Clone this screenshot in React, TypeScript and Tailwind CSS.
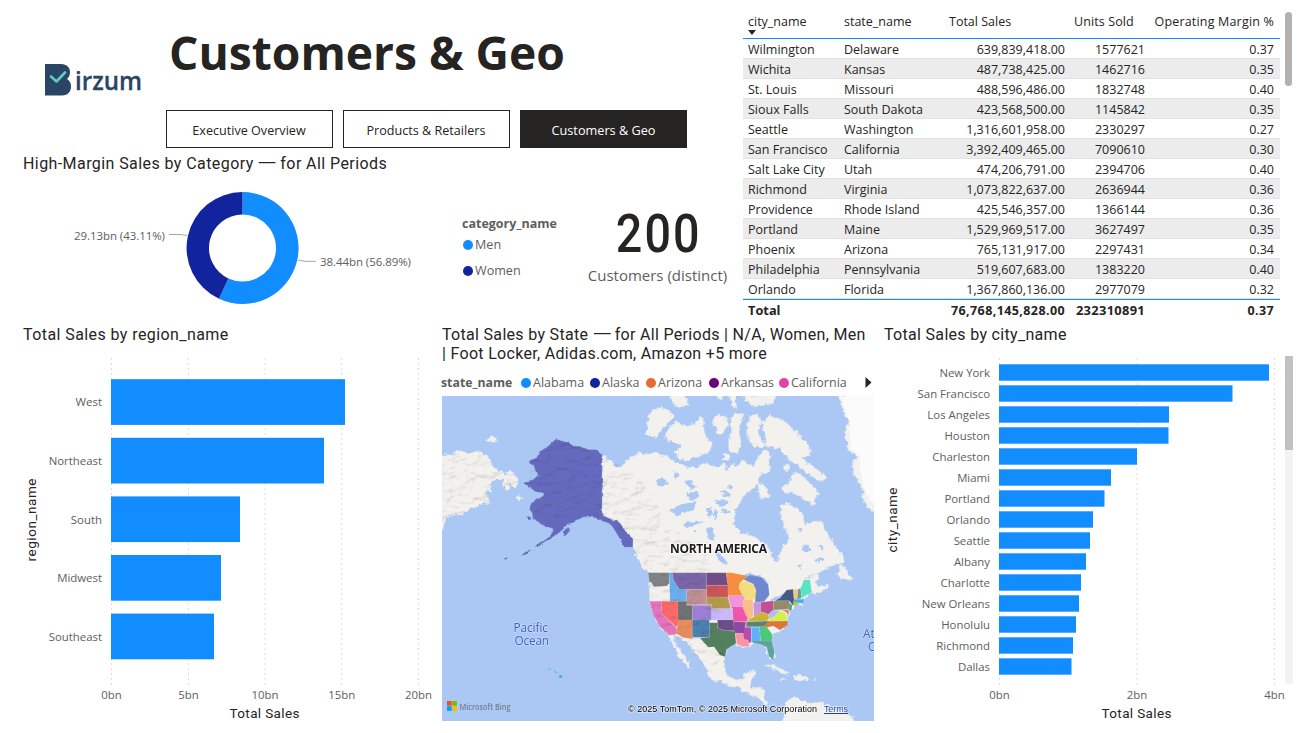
import React from "react";

const cities: [string, string, string, string, string][] = [
  ["Wilmington", "Delaware", "639,839,418.00", "1577621", "0.37"],
  ["Wichita", "Kansas", "487,738,425.00", "1462716", "0.35"],
  ["St. Louis", "Missouri", "488,596,486.00", "1832748", "0.40"],
  ["Sioux Falls", "South Dakota", "423,568,500.00", "1145842", "0.35"],
  ["Seattle", "Washington", "1,316,601,958.00", "2330297", "0.27"],
  ["San Francisco", "California", "3,392,409,465.00", "7090610", "0.30"],
  ["Salt Lake City", "Utah", "474,206,791.00", "2394706", "0.40"],
  ["Richmond", "Virginia", "1,073,822,637.00", "2636944", "0.36"],
  ["Providence", "Rhode Island", "425,546,357.00", "1366144", "0.36"],
  ["Portland", "Maine", "1,529,969,517.00", "3627497", "0.35"],
  ["Phoenix", "Arizona", "765,131,917.00", "2297431", "0.34"],
  ["Philadelphia", "Pennsylvania", "519,607,683.00", "1383220", "0.40"],
  ["Orlando", "Florida", "1,367,860,136.00", "2977079", "0.32"],
];

const tableCols = "grid grid-cols-[97px_96px_129px_80px_135px]";

function Logo() {
  return (
    <svg className="overflow-visible" width="98" height="34" viewBox="0 0 98 34">
      <path
        d="M0 1H16C22 1 25 5 25 9C25 12 24 14 22 16C25 18 26 20 26 24C26 29 22 32.500 17 32.500H0Z"
        fill="#2a4565"
      />
      <path d="M6 13.500L11.500 18.500L20 9.500" fill="none" stroke="#62cbbf" strokeWidth="2.600" strokeLinecap="round" strokeLinejoin="round" />
      <text x="30" y="26.500" fontFamily="Open Sans, sans-serif" fontWeight="600" fontSize="26" fill="#2a4565" stroke="#2a4565" strokeWidth=".3" textLength="67" lengthAdjust="spacingAndGlyphs">
        irzum
      </text>
    </svg>
  );
}

function NavButton({ label, active }: { label: string; active?: boolean }) {
  return (
    <button
      className={
        active
          ? "flex h-[38px] w-[167px] items-center justify-center border border-[#252423] bg-[#252423] pt-1 text-[12.7px] text-white"
          : "flex h-[38px] w-[167px] items-center justify-center border border-[#252423] bg-white pt-1 pr-px text-[12.6px] text-[#252423]"
      }
    >
      {label}
    </button>
  );
}

function PanelTitle({ children, wide }: { children: React.ReactNode; wide?: boolean }) {
  return (
    <h2
      className={
        wide
          ? "font-['Roboto',sans-serif] text-[16px] leading-[19px] font-normal tracking-[0.42px] whitespace-nowrap text-[#252423]"
          : "font-['Roboto',sans-serif] text-[16px] leading-[19px] font-normal tracking-[0.31px] whitespace-nowrap text-[#252423]"
      }
    >
      {children}
    </h2>
  );
}

function Dash() {
  return <span className="mr-[2px] ml-[3px] inline-block scale-x-[1.6]">—</span>;
}

function Donut() {
  return (
    <svg width="420" height="130" viewBox="20 180 420 130" fontFamily="Open Sans, sans-serif" fontSize="11.500" fill="#605e5c">
      <path d="M242.500 192A56 56 0 1 1 219 298.800L228.400 278.400A33.500 33.500 0 1 0 242.500 214.500Z" fill="#118dff" />
      <path d="M219 298.800A56 56 0 0 1 242.500 192V214.500A33.500 33.500 0 0 0 228.400 278.400Z" fill="#12239e" />
      <path d="M169 234.500H180L187 235.500M298 260L304 261.300H316" fill="none" stroke="#a6a6a6" />
      <text x="74" y="240" textLength="91">29.13bn (43.11%)</text>
      <text x="320" y="266" textLength="91">38.44bn (56.89%)</text>
    </svg>
  );
}

function SalesTable() {
  return (
    <section className="flex gap-[5px] pt-[11px] pl-[2px] text-[12.5px] text-[#252423]">
      <div className="w-[537px]">
        <div className={`${tableCols} h-7 border-b border-[#118dff] pt-px text-[12.5px] leading-5`}>
          <div className="relative pl-[5px]">
            city_name
            <svg className="absolute top-[18px] left-[5px]" width="8" height="5" viewBox="0 0 8 5">
              <path d="M0 0H8L4 5Z" fill="#252423" />
            </svg>
          </div>
          <div className="pl-1">state_name</div>
          <div className="pl-[13px]">Total Sales</div>
          <div className="pl-[9px] tracking-[0.1px]">Units Sold</div>
          <div className="pr-[6px] text-right tracking-[0.18px] whitespace-nowrap">Operating Margin %</div>
        </div>
        {cities.map((r, i) => (
          <div
            key={r[0]}
            className={
              i % 2
                ? `${tableCols} h-5 border-b border-[#e2e2e2] bg-[#ececec] leading-[21px]`
                : `${tableCols} h-5 border-b border-[#e2e2e2] leading-[21px]`
            }
          >
            <div className="pl-[5px]">{r[0]}</div>
            <div className="pl-1">{r[1]}</div>
            <div className="text-right">{r[2]}</div>
            <div className="text-right">{r[3]}</div>
            <div className="pr-[6px] text-right">{r[4]}</div>
          </div>
        ))}
        <div className={`${tableCols} h-5 border-t border-[#118dff] text-[12.5px] leading-[21px] font-bold`}>
          <div className="pl-[5px] text-[12.8px]">Total</div>
          <div />
          <div className="text-right tracking-[0.4px]">76,768,145,828.00</div>
          <div className="pl-2 text-right text-[12.9px] tracking-[0.3px]">232310891</div>
          <div className="pr-[6px] text-right tracking-[0.4px]">0.37</div>
        </div>
      </div>
      <div className="mt-[1px] h-[74px] w-[7px] rounded-full bg-[#b3b0ad]" />
    </section>
  );
}

type Bar = { name: string; end: number };

function BarChart(p: {
  bars: Bar[];
  view: string;
  width: number;
  zero: number;
  ticks: [number, string][];
  top: number;
  pitch: number;
  bar: number;
  axis: string;
  axisX: number;
  axisLen: number;
  titleX: number;
}) {
  return (
    <svg width={p.width} height="375" viewBox={p.view} fontFamily="Open Sans, sans-serif" fontSize="11.400" fill="#605e5c">
      {p.ticks.map(([x, t]) => (
        <g key={t}>
          <line x1={x} x2={x} y1="358" y2="685" stroke="#dedede" strokeDasharray="2 3" />
          <text x={x} y="699" textAnchor="middle">{t}</text>
        </g>
      ))}
      {p.bars.map((b, i) => (
        <g key={b.name}>
          <rect x={p.zero} y={p.top + i * p.pitch} width={b.end - p.zero} height={p.bar} fill="#118dff" />
          <text x={p.zero - 9} y={Math.round(p.top + i * p.pitch + p.bar / 2 + 4.3)} textAnchor="end">{b.name}</text>
        </g>
      ))}
      <g fontFamily="Roboto, sans-serif" fontSize="13.500" fill="#252423">
        <text x={p.titleX} y="718" textAnchor="middle" textLength="70">Total Sales</text>
        <text transform={`translate(${p.axisX} 520) rotate(-90)`} textAnchor="middle" textLength={p.axisLen}>{p.axis}</text>
      </g>
    </svg>
  );
}

const regionBars: Bar[] = [
  { name: "West", end: 345 },
  { name: "Northeast", end: 324 },
  { name: "South", end: 240 },
  { name: "Midwest", end: 221 },
  { name: "Southeast", end: 214 },
];

const cityBars: Bar[] = [
  { name: "New York", end: 1269 },
  { name: "San Francisco", end: 1232.5 },
  { name: "Los Angeles", end: 1169 },
  { name: "Houston", end: 1168.5 },
  { name: "Charleston", end: 1137 },
  { name: "Miami", end: 1111 },
  { name: "Portland", end: 1104.5 },
  { name: "Orlando", end: 1093 },
  { name: "Seattle", end: 1090 },
  { name: "Albany", end: 1086 },
  { name: "Charlotte", end: 1081 },
  { name: "New Orleans", end: 1079 },
  { name: "Honolulu", end: 1076 },
  { name: "Richmond", end: 1073 },
  { name: "Dallas", end: 1071.5 },
];

const statesLegend: [string, string, string][] = [
  ["Alabama", "bg-[#118dff]", "w-[69px]"],
  ["Alaska", "bg-[#12239e]", "w-[56px]"],
  ["Arizona", "bg-[#e66c37]", "w-[63px]"],
  ["Arkansas", "bg-[#6b007b]", "w-[70px]"],
  ["California", "bg-[#e044a7]", "w-[80px]"],
];

const mainland =
  "M485 178L500 190 515 202 530 212 545 216 550 208 565 192 590 180 600 170 620 180 645 172 675 182 705 200 725 210 745 218 770 218 795 206 815 210 835 215 850 205 860 225 880 205 888 216 908 195 925 208 942 215 955 190 957 180 972 166 990 172 988 200 992 225 975 240 962 236 958 255 950 268 935 285 915 300 900 320 888 340 880 368 882 392 895 400 905 415 925 420 945 425 965 440 985 455 995 480 1002 497 1010 502 1017 480 1026 470 1027 455 1045 440 1050 430 1042 415 1035 400 1030 380 1020 360 1026 345 1022 330 1040 325 1055 330 1070 340 1085 350 1090 375 1100 390 1115 380 1130 378 1145 380 1155 400 1165 420 1175 440 1190 460 1205 478 1212 495 1205 505 1185 510 1160 518 1135 535 1105 545 1088 558 1110 548 1130 535 1140 545 1122 560 1135 575 1168 568 1155 585 1125 598 1112 592 1100 602 1085 615 1092 625 1070 629 1055 640 1052 650 1042 662 1043 685 1020 706 1000 720 990 738 1002 770 1003 790 998 796 985 780 978 758 965 745 945 745 930 747 928 756 905 752 880 748 865 764 857 778 850 800 853 825 865 847 890 855 910 850 917 833 943 827 945 840 935 855 930 877 945 880 970 883 977 890 973 915 980 930 1000 930 975 932 955 905 930 900 905 885 890 877 870 873 845 860 810 855 805 840 795 815 775 785 760 765 745 750 730 733 700 722 703 740 718 760 735 785 748 808 750 822 735 808 718 785 705 760 692 735 688 722 665 700 645 665 628 620 628 575 630 533 618 525 600 500 590 480 578 455 560 420 540 385 510 372 485 362Z";

const land = [
  "M0 178L35 180 45 172 75 170 80 178 100 168 125 172 145 185 155 200 160 215 185 232 200 235 210 225 222 240 238 255 228 265 225 278 210 270 200 285 188 272 190 255 170 250 155 258 150 275 155 290 130 288 138 300 147 325 120 328 100 335 85 345 70 358 45 358 30 365 20 360 15 380 5 410 0 420Z",
  "M138 138L150 124 172 128 170 138Z",
  "M222 305L235 303 247 308 240 314 228 311Z",
  "M625 75L635 45 660 38 690 48 700 68 675 95 650 122 635 130 620 110Z",
  "M675 115L705 80 720 85 740 95 765 85 780 60 793 75 790 100 800 130 815 150 805 175 775 180 740 198 720 190 705 170 725 150 680 135Z",
  "M870 70L890 55 913 60 895 100 903 140 895 175 873 175 865 150 875 110Z",
  "M817 75L835 60 860 65 863 95 845 120 830 110Z",
  "M920 100L930 65 955 60 963 80 953 110 970 140 980 155 945 155 930 140Z",
  "M965 80L990 62 1030 75 1045 90 1070 110 1105 150 1110 180 1085 190 1115 210 1145 235 1160 250 1140 260 1110 240 1075 215 1050 195 1030 175 1015 160 980 155 975 120Z",
  "M685 0H735L745 30 705 35Z",
  "M828 0H850L845 20Z",
  "M870 0H885L890 40 875 30Z",
  "M910 0H1005L1000 25 975 30 945 35 920 20Z",
  "M850 180L868 175 870 195 848 198Z",
  "M1045 265L1065 230 1085 240 1115 270 1135 295 1120 330 1085 310 1065 295 1030 290 1028 278Z",
  "M1030 210L1045 207 1047 225 1033 228Z",
  "M950 268L970 262 980 280 990 305 965 312Z",
  "M1193 0L1215 60 1225 80 1215 110 1225 170 1255 180 1235 210 1245 250 1270 280 1270 320 1295 350 1310 345V0Z",
  "M1190 540L1200 513 1215 512 1220 530 1240 550 1235 560 1215 550 1200 552Z",
  "M970 810L995 810 1025 822 1050 836 1030 837 1005 822Z",
  "M1060 840L1095 842 1103 852 1080 858 1060 852Z",
  "M1022 852L1036 854 1026 858Z",
  "M1115 852H1130L1124 857Z",
  "M1028 932L1045 915 1070 905 1085 920 1125 923 1155 925 1175 940 1215 950 1240 970 1250 985H1030L1035 955Z",
  "M600 505L618 508 635 525 630 534 612 522Z",
];

const lakes = [
  "M645 255L665 248 685 262 668 275 650 270Z",
  "M690 348L712 330 740 325 770 322 762 342 735 350 708 360Z",
  "M728 255L748 252 768 275 752 282Z",
  "M738 298L777 288 774 308 750 314Z",
  "M730 388L765 376 790 381 765 391 735 398Z",
  "M798 402L817 398 826 437 808 434Z",
  "M826 466L846 483 864 505 855 512 836 492Z",
  "M822 318L850 313 862 326 838 332Z",
  "M798 343L812 332 820 364 806 368Z",
  "M840 288L865 290 880 300 850 302Z",
  "M845 338L872 350 868 358 848 352Z",
  "M865 270L880 272 876 284 866 280Z",
  "M822 345L832 350 828 372 820 366Z",
  "M700 225L718 240 712 250 702 238Z",
  "M762 402L772 406 768 416 760 410Z",
  "M1088 453L1107 448 1110 467 1092 470Z",
  "M1138 448L1154 455 1145 470Z",
  "M1123 495L1150 488 1154 497 1130 503Z",
  "M1070 400L1085 402 1080 412Z",
  "M1075 510L1085 505 1083 525Z",
  "M905 540L930 535 965 545 985 565 975 570 945 560 915 558Z",
  "M990 615L1025 598 1035 605 1005 622Z",
];

const states: [string, string][] = [
  ["25,38 88,38 88,70 80,78 42,80 35,68 28,65", "#7f8388"],
  ["88,38 97,38 100,60 110,75 118,88 140,88 140,123 90,123", "#6aaef0"],
  ["97,38 200,38 200,88 140,88 118,88 110,75 100,60", "#7b66a8"],
  ["200,38 258,38 264,76 200,76", "#6f4d86"],
  ["200,76 264,76 264,112 200,112", "#cb5459"],
  ["258,38 275,38 323,48 300,68 297,85 310,107 264,107 264,76", "#f58d42"],
  ["300,68 320,62 345,78 348,118 312,118 297,85", "#f5dc7d"],
  ["310,58 330,45 365,52 385,75 388,105 372,125 345,127 348,90 340,72", "#6f87cf"],
  ["140,88 200,88 200,134 140,134", "#bf9096"],
  ["200,110 264,112 272,146 215,146 215,134 200,134", "#b39a4c"],
  ["264,107 310,107 317,125 308,140 272,140", "#f193dd"],
  ["28,124 65,124 65,160 110,205 110,222 88,226 60,200 40,165", "#e474bd"],
  ["65,124 114,124 114,195 108,200 65,160", "#fb6a6a"],
  ["114,124 140,124 140,136 157,136 157,180 114,180", "#707173"],
  ["157,136 215,136 215,180 157,180", "#9b80d4"],
  ["215,146 278,146 280,180 215,180", "#c9b9fb"],
  ["272,140 308,140 325,170 320,185 280,185 278,146", "#ee55ab"],
  ["308,120 338,118 340,165 328,180 317,165 308,140", "#fabd88"],
  ["340,127 363,127 363,160 342,172", "#c795dc"],
  ["363,127 400,122 400,150 385,163 363,155", "#c24f95"],
  ["320,184 328,178 345,168 363,156 385,163 388,175 380,183", "#cbb435"],
  ["320,185 388,183 375,200 318,200", "#5a8276"],
  ["385,163 400,150 422,152 400,172 390,178", "#b3bdf0"],
  ["380,183 400,172 420,152 438,160 442,183", "#d3f04a"],
  ["400,124 448,122 448,148 400,150", "#948b67"],
  ["405,122 420,115 440,90 460,88 462,118 460,138 448,122", "#465a86"],
  ["460,88 474,88 472,118 462,118", "#fac47c"],
  ["474,88 482,85 484,115 472,118", "#6a9aa0"],
  ["482,85 492,60 510,60 515,95 485,115", "#57e5c1"],
  ["462,118 492,118 490,130 462,128", "#47b1e8"],
  ["460,127 476,127 473,136 460,137", "#c8b94a"],
  ["448,128 456,135 455,150 447,152", "#4aa56c"],
  ["425,150 446,150 446,165 438,156", "#dd7383"],
  ["370,200 385,184 443,183 443,195 420,210 400,198 382,202", "#d9773f"],
  ["358,200 380,200 398,225 395,243 362,243", "#4bc878"],
  ["334,202 358,202 362,243 334,245", "#5fb0fb"],
  ["312,202 333,202 333,248 318,247 308,230", "#b64cae"],
  ["280,185 318,187 312,220 283,220", "#8a48a0"],
  ["287,220 310,220 312,238 325,240 328,258 310,260 290,252", "#fb94a2"],
  ["232,180 280,180 283,212 255,212 234,205", "#6b4f88"],
  ["208,188 233,188 233,205 255,212 285,214 288,250 260,268 255,290 240,285 222,260 205,262 180,234 208,232", "#55805f"],
  ["114,180 157,180 157,237 128,232 108,220 112,200", "#ea8b5e"],
  ["157,180 208,180 208,232 157,232", "#4c80b0"],
  ["335,243 395,243 403,275 400,300 388,290 380,262 360,252 340,250", "#5da49f"],
];

const alaska =
  "M350 132L362 138 388 145 400 155 420 155 445 165 470 165 485 178V362L510 372 520 380 530 375 545 395 560 415 578 432 577 455 553 455 540 430 525 405 515 390 495 378 470 368 440 362 430 365 410 375 400 382 385 385 375 395 360 410 345 420 330 432 315 440 300 450 285 458 290 450 310 440 330 425 340 410 340 400 315 392 300 385 295 375 280 370 278 355 270 340 275 325 290 312 300 308 312 303 312 293 295 290 280 285 265 272 252 265 265 258 280 255 295 240 290 225 280 210 268 205 270 197 290 190 300 170 320 158 335 145ZM370 410L385 398 388 408 375 422ZM247 480L262 467 270 465 258 477ZM260 368L268 365 273 371 266 374ZM192 492L202 488 198 493Z";

function NorthAmericaMap() {
  return (
    <svg width="432" height="325" viewBox="442 396 432 325" fontFamily="Open Sans, sans-serif">
      <defs>
        <filter id="coast" x="-5%" y="-5%" width="110%" height="110%">
          <feTurbulence type="fractalNoise" baseFrequency="0.22" numOctaves="3" seed="4" result="n" />
          <feDisplacementMap in="SourceGraphic" in2="n" scale="6" xChannelSelector="R" yChannelSelector="G" />
        </filter>
        <filter id="shore" x="-5%" y="-5%" width="110%" height="110%">
          <feTurbulence type="fractalNoise" baseFrequency="0.06" numOctaves="3" seed="4" result="n" />
          <feDisplacementMap in="SourceGraphic" in2="n" scale="9" xChannelSelector="R" yChannelSelector="G" />
        </filter>
        <filter id="relief" x="0" y="0" width="100%" height="100%" colorInterpolationFilters="sRGB">
          <feTurbulence type="fractalNoise" baseFrequency="0.025 0.045" numOctaves="4" seed="9" result="n" />
          <feDiffuseLighting in="n" surfaceScale="9" diffuseConstant="1.13" lightingColor="#ffffff" result="l">
            <feDistantLight azimuth="230" elevation="62" />
          </feDiffuseLighting>
          <feComposite in="l" in2="SourceGraphic" operator="in" />
        </filter>
      </defs>
      <rect x="442" y="396" width="432" height="325" fill="#abc7f3" />
      <g filter="url(#coast)">
        <g transform="translate(440 395) scale(.33333)" fill="#f2f1ed" stroke="#dfe6ee" strokeWidth="2">
          <path d={mainland} />
          {land.map((d) => (
            <path key={d} d={d} />
          ))}
          <path d="M1200 0L1228 80 1232 170 1262 190 1262 250 1280 300 1310 340V0Z" fill="#fbfbfb" stroke="none" />
          <g fill="#abc7f3" stroke="none">
            {lakes.map((d) => (
              <path key={d} d={d} />
            ))}
          </g>
        </g>
      </g>
      <g transform="translate(640 560) scale(.33333)" stroke="#ffffff" strokeOpacity=".15" strokeWidth="1.500">
        {states.map(([pts, fill]) => (
          <polygon key={pts} points={pts} fill={fill} />
        ))}
      </g>
      <path filter="url(#shore)" transform="translate(440 395) scale(.33333)" d={alaska} fill="#656bbe" stroke="#6268ba" strokeWidth="2" />
      <g transform="translate(440 395) scale(.33333)">
        <g className="opacity-20 mix-blend-multiply">
          <path
            filter="url(#relief)"
            d="M485 178L350 135 275 200 265 265 310 295 275 345 340 395 440 362 485 362 570 430 625 530 630 620 665 700 700 722 745 750 805 840 850 780 850 640 800 480 680 380 600 250Z"
          />
          <path filter="url(#relief)" d={land[0]} />
        </g>
      </g>
      <path d="M548 668.500L551 669.500M554 671L557 673" stroke="#52c5ee" strokeWidth="1.200" />
      <circle cx="560.500" cy="676.500" r="1.600" fill="#33b1e6" />
      <text x="670" y="553" fontSize="12" fontWeight="700" fill="#1b1b1b" stroke="#ffffff" strokeWidth="2" strokeOpacity=".6" paintOrder="stroke" textLength="97">NORTH AMERICA</text>
      <g fontSize="11.800" fill="#3f62c4" stroke="#c6d8f8" strokeWidth="1.500" paintOrder="stroke">
        <text x="513.500" y="632" textLength="34.500">Pacific</text>
        <text x="514.500" y="645" textLength="34.500">Ocean</text>
        <text x="863" y="638">Atlantic</text>
        <text x="868" y="651">Ocean</text>
      </g>
      <g>
        <rect x="447" y="701" width="4.700" height="4.700" fill="#f25022" />
        <rect x="452.200" y="701" width="4.700" height="4.700" fill="#7fba00" />
        <rect x="447" y="706.200" width="4.700" height="4.700" fill="#00a4ef" />
        <rect x="452.200" y="706.200" width="4.700" height="4.700" fill="#ffb900" />
        <text x="459.500" y="709.500" fontSize="8.500" fontWeight="600" fill="#73808f" textLength="51" lengthAdjust="spacingAndGlyphs">Microsoft Bing</text>
      </g>
      <g fontFamily="Liberation Sans, sans-serif" fontSize="9" stroke="#ffffff" strokeWidth="1.500" strokeOpacity=".6" paintOrder="stroke">
        <text x="628" y="712" fill="#000000" textLength="189">© 2025 TomTom, © 2025 Microsoft Corporation</text>
        <text x="824" y="712" fill="#1f3fa8" textLength="24">Terms</text>
      </g>
      <path d="M824 713.500H848" stroke="#1f3fa8" />
    </svg>
  );
}

export default function App() {
  return (
    <main className="flex h-[733px] w-[1313px] flex-col overflow-hidden bg-white font-['Open_Sans','Noto_Sans',sans-serif]">
      <div className="flex h-[325px]">
        <div className="w-[741px]">
          <header className="flex h-[154px]">
            <div className="w-[166px] pt-[63px] pl-[45px]">
              <Logo />
            </div>
            <div className="pt-[21px]">
              <h1 className="pl-[3px] text-[46.2px] leading-[64px] font-bold whitespace-nowrap text-[#252423]">Customers &amp; Geo</h1>
              <nav className="mt-[25px] flex gap-[10px]">
                <NavButton label="Executive Overview" />
                <NavButton label="Products & Retailers" />
                <NavButton label="Customers & Geo" active />
              </nav>
            </div>
          </header>
          <div className="flex">
            <section className="w-[440px] pl-[23px]">
              <PanelTitle wide>
                High-Margin Sales by Category <Dash /> for All Periods
              </PanelTitle>
              <div className="-ml-[3px] pt-[7px]">
                <Donut />
              </div>
            </section>
            <div className="w-[147px] pt-[61px] pl-[22px] text-[12.6px] text-[#605e5c]">
              <div className="text-[12.5px] leading-[18px] font-bold">category_name</div>
              <div className="mt-[3px] flex h-[18px] items-center gap-[2px] pl-[1px]">
                <span className="size-[10px] rounded-full bg-[#118dff]" />
                Men
              </div>
              <div className="mt-2 flex h-[18px] items-center gap-[2px] pl-[1px]">
                <span className="size-[10px] rounded-full bg-[#12239e]" />
                Women
              </div>
            </div>
            <div className="flex w-[141px] flex-col items-center pt-[52px]">
              <div className="scale-x-[.88] pl-[3px] font-['Roboto',sans-serif] text-[53px] leading-[56px] font-medium tracking-[2.5px] text-[#252423]">200</div>
              <div className="mt-[3px] text-[15px] leading-[20px] whitespace-nowrap text-[#605e5c]">Customers (distinct)</div>
            </div>
          </div>
        </div>
        <SalesTable />
      </div>
      <div className="flex h-[408px]">
        <section className="w-[442px]">
          <div className="h-[33px] pl-[23px]">
            <PanelTitle wide>Total Sales by region_name</PanelTitle>
          </div>
          <BarChart
            bars={regionBars} view="0 358 442 375" width={442} zero={111} top={379.2} pitch={58.6} bar={45.7}
            ticks={[[111.5, "0bn"], [188.5, "5bn"], [265, "10bn"], [341.7, "15bn"], [418.5, "20bn"]]}
            axis="region_name" axisX={36} axisLen={83} titleX={264.5}
          />
        </section>
        <section className="w-[432px]">
          <PanelTitle>
            Total Sales by State <Dash /> for All Periods | N/A, Women, Men
            <br />| Foot Locker, Adidas.com, Amazon +5 more
          </PanelTitle>
          <div className="flex h-[33px] items-center pt-[7px] text-[12.5px] text-[#605e5c]">
            <span className="-ml-px w-[80px] text-[12.3px] font-bold">state_name</span>
            {statesLegend.map(([n, dot, w]) => (
              <span key={n} className={`${w} flex shrink-0 items-center gap-[2px]`}>
                <span className={`${dot} size-[10px] shrink-0 rounded-full`} />
                {n}
              </span>
            ))}
            <svg className="mb-[2px] ml-[6px]" width="7" height="11" viewBox="0 0 7 11">
              <path d="M.5 0L6.500 5.500L.5 11Z" fill="#252423" />
            </svg>
          </div>
          <NorthAmericaMap />
        </section>
        <section className="w-[439px]">
          <div className="h-[31px] pl-[10px]">
            <PanelTitle>Total Sales by city_name</PanelTitle>
          </div>
          <div className="flex">
            <div className="pt-[2px]">
              <BarChart
                bars={cityBars} view="874 358 411 375" width={411} zero={999} top={364.3} pitch={21} bar={16.4}
                ticks={[[999.5, "0bn"], [1137, "2bn"], [1274.5, "4bn"]]}
                axis="city_name" axisX={897} axisLen={65} titleX={1136.5}
              />
            </div>
            <div className="h-[328px] w-2 bg-[#f3f3f3]">
              <div className="h-[94px] bg-[#c2c2c2]" />
            </div>
          </div>
        </section>
      </div>
    </main>
  );
}
